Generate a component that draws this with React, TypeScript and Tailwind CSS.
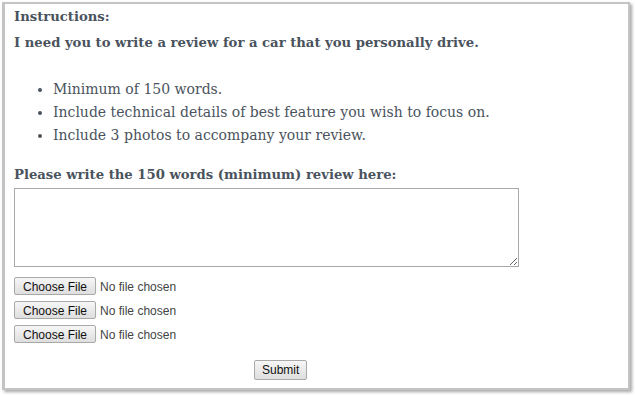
export default function App() {
  return (
    <div className="w-[635px] h-[395px] bg-white p-[2px] font-['DejaVu_Serif',serif] text-[#4a535d]">
      <div className="w-[628px] h-[388px] border-l-[3px] border-t-[2px] border-r-[2px] border-b-[2px] border-[#c4c4c4] shadow-[2px_2px_3px_rgba(0,0,0,0.35)] bg-white pl-[9px] pt-[3px]">
        <div className="text-[13.2px] font-bold leading-[20px]">Instructions:</div>
        <div className="text-[13.2px] font-bold leading-[20px] mt-[6px]">
          I need you to write a review for a car that you personally drive.
        </div>
        <ul className="list-disc pl-[39px] mt-[25px] text-[14px] leading-[23px]">
          <li>Minimum of 150 words.</li>
          <li>Include technical details of best feature you wish to focus on.</li>
          <li>Include 3 photos to accompany your review.</li>
        </ul>
        <div className="text-[13.2px] font-bold leading-[20px] mt-[18px]">
          Please write the 150 words (minimum) review here:
        </div>
        <textarea className="block mt-[3px] w-[505px] h-[79px] border border-[#a9a9a9] bg-white resize-y outline-none" />
        <div className="mt-[10px] flex flex-col gap-[6px] font-['Liberation_Sans',sans-serif] text-[12px] text-[#444]">
          {[0, 1, 2].map((i) => (
            <input
              key={i}
              type="file"
              className="block h-[18px] leading-[18px] file:h-[18px] file:px-[8px] file:mr-[4px] file:border file:border-[#a9a9a9] file:rounded-[2px] file:bg-gradient-to-b file:from-[#f6f6f6] file:to-[#dedede] file:text-[#111] file:text-[12px]"
            />
          ))}
        </div>
        <div className="mt-[14px] pl-[240px]">
          <button
            type="button"
            className="h-[20px] px-[7px] border border-[#a9a9a9] rounded-[2px] bg-gradient-to-b from-[#f6f6f6] to-[#dedede] font-['Liberation_Sans',sans-serif] text-[12px] text-[#111]"
          >
            Submit
          </button>
        </div>
      </div>
    </div>
  );
}
